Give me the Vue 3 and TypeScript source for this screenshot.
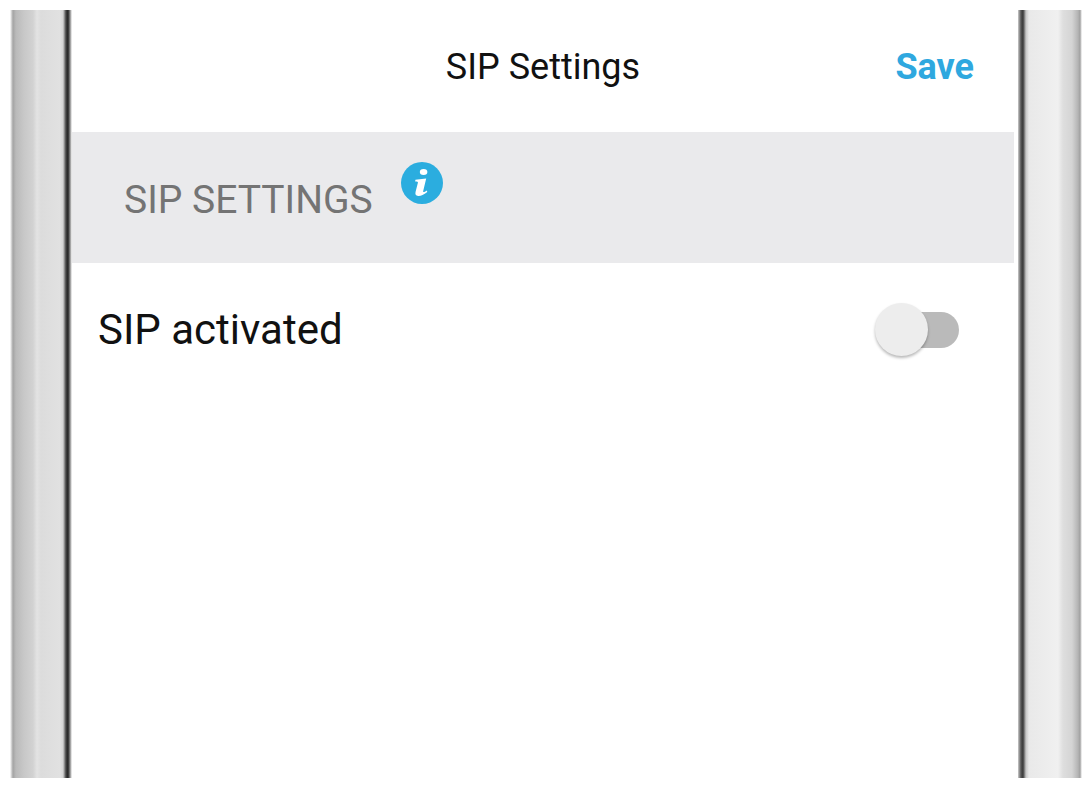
<script setup lang="ts">
import { ref } from 'vue'

const sipActivated = ref(false)
</script>

<template>
  <div class="stage">
    <div class="rail rail-left" aria-hidden="true"></div>
    <main class="screen">
      <header class="top-bar">
        <h1 class="title">SIP Settings</h1>
        <button type="button" class="save">Save</button>
      </header>
      <section>
        <div class="section-head">
          <h2 class="section-title">SIP SETTINGS</h2>
          <button type="button" class="info" aria-label="About SIP settings">
            <svg viewBox="0 0 42 42" aria-hidden="true">
              <circle cx="21" cy="21" r="21" fill="#2baddf" />
              <ellipse cx="22.6" cy="10" rx="3.8" ry="3" fill="#fff" />
              <path
                d="M14.4 17.8 L25.2 16.4 L22.2 29 C21.9 30.4 22.7 30.6 25.8 28.6 L26.3 30 C22.5 33 19.6 34.2 17.2 34 C14.6 33.8 14 32.2 14.6 29.8 L16.9 20.8 C17.1 19.8 16.5 19.6 14.2 19.5 Z"
                fill="#fff"
              />
            </svg>
          </button>
        </div>
        <label class="row">
          <span>SIP activated</span>
          <input v-model="sipActivated" type="checkbox" role="switch" class="switch" />
        </label>
      </section>
    </main>
    <div class="rail rail-right" aria-hidden="true"></div>
  </div>
</template>

<style>
body {
  margin: 0;
  background: #fff;
}
</style>

<style scoped>
.stage {
  box-sizing: border-box;
  display: flex;
  min-height: 100vh;
  padding: 10px;
  font-family: Roboto, "Liberation Sans", sans-serif;
  color: #111;
}

.rail {
  flex: none;
  width: 62px;
}

.rail-left {
  background: linear-gradient(
    to right,
    #fff 0,
    #a4a4a4 3px,
    #bababa 6px,
    #c8c8c8 14px,
    #d2d2d2 23px,
    #e3e3e3 27px,
    #dcdcdc 31px,
    #e1e1e1 50px,
    #d4d4d4 53px,
    #444 56px,
    #222 58px,
    #888 60px,
    #fff 62px
  );
}

.rail-right {
  width: 64px;
  margin-left: 4px;
  background: linear-gradient(
    to right,
    #ccc 0,
    #555 3px,
    #3a3a3a 5px,
    #c8c8c8 8px,
    #e9e9e9 11px,
    #f0f0f0 40px,
    #dedede 45px,
    #d4d4d4 54px,
    #b4b4b4 60px,
    #a0a0a0 62px,
    #fff 64px
  );
}

.screen {
  flex: 1;
  min-width: 0;
}

.top-bar {
  display: grid;
  grid-template-columns: 1fr auto 1fr;
  align-items: center;
  min-height: 122px;
  padding: 0 40px;
  box-sizing: border-box;
}

.title {
  grid-column: 2;
  margin: 0;
  padding-bottom: 8px;
  font-size: 36px;
  font-weight: 400;
  line-height: 44px;
}

.save {
  justify-self: end;
  margin: 0;
  padding: 0 0 8px;
  border: 0;
  background: none;
  font: 700 36px/44px Roboto, "Liberation Sans", sans-serif;
  color: #2fa8df;
  cursor: pointer;
}

.section-head {
  display: flex;
  align-items: flex-start;
  gap: 28px;
  box-sizing: border-box;
  min-height: 131px;
  padding: 30px 52px;
  background: #eaeaec;
}

.section-title {
  margin: 0;
  padding-top: 16px;
  font-size: 39px;
  font-weight: 400;
  line-height: 44px;
  color: #747474;
}

.info {
  flex: none;
  width: 42px;
  height: 42px;
  padding: 0;
  border: 0;
  border-radius: 50%;
  background: none;
  cursor: pointer;
}

.info svg {
  display: block;
  width: 100%;
  height: 100%;
}

.row {
  display: flex;
  align-items: center;
  justify-content: space-between;
  box-sizing: border-box;
  min-height: 134px;
  padding: 0 55px 0 26px;
  font-size: 42px;
  line-height: 50px;
}

.switch {
  position: relative;
  appearance: none;
  flex: none;
  width: 76px;
  height: 36px;
  margin: 0;
  border-radius: 18px;
  background: #bababa;
  cursor: pointer;
}

.switch::before {
  content: "";
  position: absolute;
  top: -9px;
  left: -8px;
  width: 53px;
  height: 53px;
  border-radius: 50%;
  background: #ededed;
  box-shadow: 0 2px 3px rgba(0, 0, 0, 0.28);
}

.switch:checked {
  background: #93d6f0;
}

.switch:checked::before {
  left: 31px;
  background: #27aee2;
}
</style>
